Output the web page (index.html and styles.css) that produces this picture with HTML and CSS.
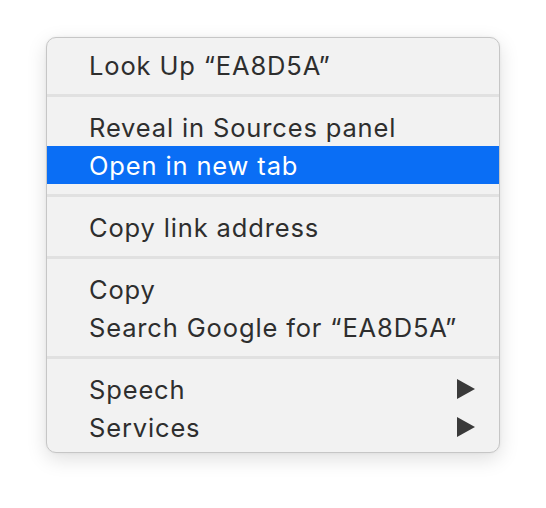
FILE: index.html
```html
<!DOCTYPE html>
<html>
<head>
<meta charset="utf-8">
<link rel="stylesheet" href="styles.css">
</head>
<body>
<div class="menu">
  <div class="item">Look Up “EA8D5A”</div>
  <div class="sep"></div>
  <div class="item">Reveal in Sources panel</div>
  <div class="item active">Open in new tab</div>
  <div class="sep"></div>
  <div class="item">Copy link address</div>
  <div class="sep"></div>
  <div class="item">Copy</div>
  <div class="item">Search Google for “EA8D5A”</div>
  <div class="sep"></div>
  <div class="item">Speech<span class="arrow"></span></div>
  <div class="item">Services<span class="arrow"></span></div>
</div>
</body>
</html>
```
FILE: styles.css
```css
html, body {
  margin: 0;
  padding: 0;
  background: #ffffff;
}
body {
  box-sizing: border-box;
  min-height: 508px;
  padding: 37px 46px 0 46px;
  width: 546px;
}
.menu {
  background: #f2f2f2;
  border: 1px solid #c6c6c6;
  border-radius: 10px;
  padding: 8px 0 6px 0;
  box-shadow: 0 6px 20px rgba(0, 0, 0, 0.13), 0 0 3px rgba(0, 0, 0, 0.06);
  font-family: Inter, "Liberation Sans", sans-serif;
  font-size: 25.5px;
  letter-spacing: 0.85px;
  color: #2e2e2e;
}
.item {
  height: 38px;
  display: flex;
  align-items: center;
  justify-content: space-between;
  padding: 0 24px 0 42px;
}
.item.active {
  background: #0a6ef5;
  color: #ffffff;
}
.sep {
  height: 3px;
  background: #e1e1e1;
  margin: 10px 0 11px 0;
}
.arrow {
  width: 0;
  height: 0;
  border-top: 10px solid transparent;
  border-bottom: 10px solid transparent;
  border-left: 18px solid #3a3a3a;
}
```
